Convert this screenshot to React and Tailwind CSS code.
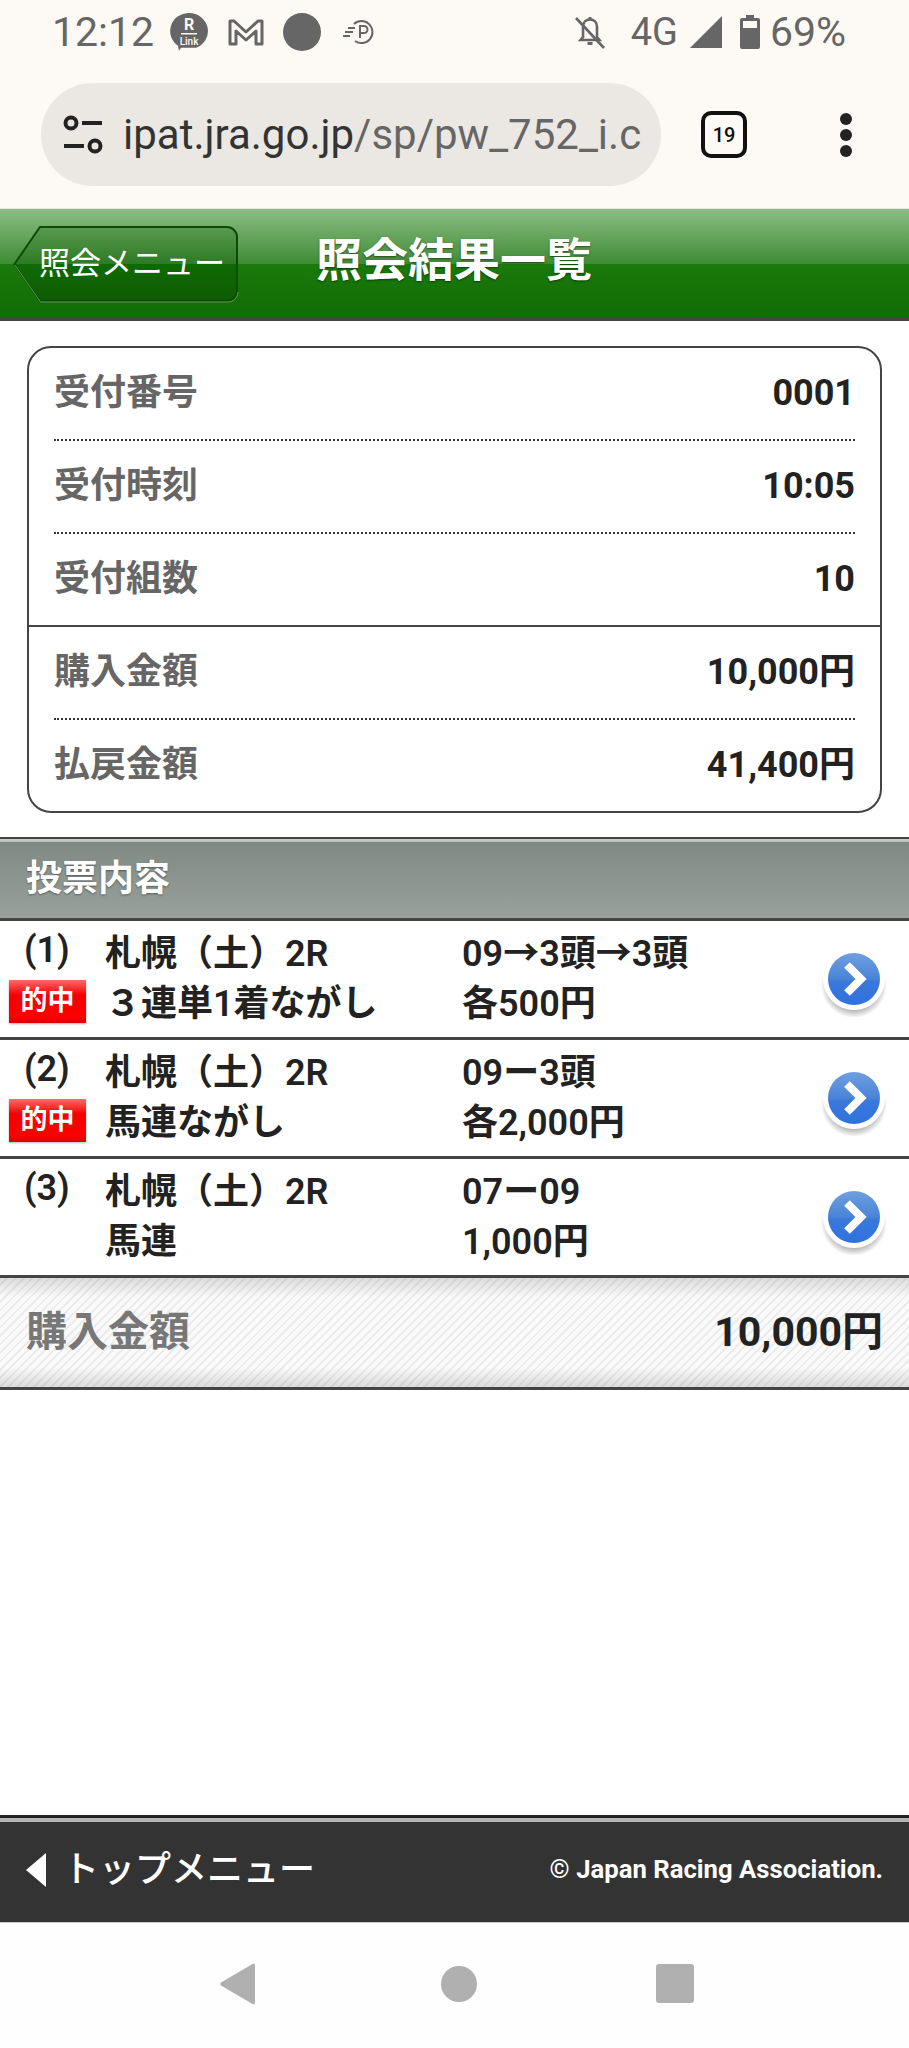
import React from 'react';

const infoTop = [
  { label: '受付番号', value: '0001' },
  { label: '受付時刻', value: '10:05' },
  { label: '受付組数', value: '10' },
];

const infoBottom = [
  { label: '購入金額', value: '10,000円' },
  { label: '払戻金額', value: '41,400円' },
];

const bets = [
  { no: '(1)', hit: true, race: '札幌（土）2R', type: '３連単1着ながし', horses: '09→3頭→3頭', amount: '各500円' },
  { no: '(2)', hit: true, race: '札幌（土）2R', type: '馬連ながし', horses: '09ー3頭', amount: '各2,000円' },
  { no: '(3)', hit: false, race: '札幌（土）2R', type: '馬連', horses: '07ー09', amount: '1,000円' },
];

const RLinkIcon = () => (
  <svg width="38" height="38" viewBox="0 0 38 38">
    <path d="M19 0a19 18 0 0 1 7 34.700H11l-2 3-1-5A18.500 18 0 0 1 19 0z" fill="#666" />
    <text x="19" y="17" textAnchor="middle" fontSize="16" fontWeight="700" fontFamily="Roboto" fill="#fdf9f5">R</text>
    <rect x="11" y="20" width="16" height="1.500" fill="#fdf9f5" />
    <text x="19" y="32" textAnchor="middle" fontSize="10" fontWeight="500" fontFamily="Roboto" fill="#fdf9f5">Link</text>
  </svg>
);

const MailIcon = () => (
  <svg width="36" height="28" viewBox="0 0 36 28" fill="none" stroke="#666" strokeWidth="3" strokeLinejoin="round">
    <path d="M2 26V3h4l12 11L30 3h4v23h-6V13l-10 9-10-9v13z" />
  </svg>
);

const PointIcon = () => (
  <svg width="32" height="26" viewBox="0 0 32 26" fill="none" stroke="#666" strokeWidth="2">
    <path d="M11 5a11 11 0 1 1 1 17" />
    <path d="M5 9h7M2 13h8M0 17h7" />
    <path d="M17 19V7h4a3.500 3.500 0 0 1 0 7h-4" />
  </svg>
);

const MutedBell = () => (
  <svg width="32" height="33" viewBox="0 0 32 33" fill="none" stroke="#666" strokeWidth="2.600">
    <path d="M9 11c0-5 3-7.500 7-7.500s7 2.500 7 7.500v10l2.500 3H6.500L9 21z" />
    <path d="M13.500 27.500h5" strokeWidth="3" />
    <path d="M16 1v2" strokeWidth="3" />
    <path d="M2 2l28 30" />
  </svg>
);

const TuneIcon = () => (
  <svg width="40" height="44" viewBox="0 0 40 44" fill="none" stroke="#222" strokeWidth="4">
    <circle cx="8" cy="10" r="5.500" />
    <path d="M19 10h20M1 33h20" />
    <circle cx="32" cy="33" r="5.500" />
  </svg>
);

const ChevronButton = () => (
  <svg width="72" height="72" viewBox="0 0 72 72">
    <defs>
      <linearGradient id="chevBlue" x1="0" y1="0" x2="0" y2="1">
        <stop offset="0" stopColor="#6f9fe0" />
        <stop offset="0.5" stopColor="#4a84d8" />
        <stop offset="0.55" stopColor="#3a78da" />
        <stop offset="1" stopColor="#2f72e0" />
      </linearGradient>
      <radialGradient id="chevShadow">
        <stop offset="0.7" stopColor="#000" stopOpacity="0.35" />
        <stop offset="1" stopColor="#000" stopOpacity="0" />
      </radialGradient>
    </defs>
    <circle cx="36" cy="40" r="33" fill="url(#chevShadow)" />
    <circle cx="36" cy="34" r="31" fill="#fff" />
    <circle cx="36" cy="34" r="26" fill="url(#chevBlue)" />
    <path d="M29 20l14 14-14 14" fill="none" stroke="#fff" strokeWidth="8" strokeLinejoin="miter" />
  </svg>
);

const InfoRow = ({ label, value }) => (
  <div className="ml-[25px] mr-[25px] flex h-[91px] items-center justify-between pb-[2px]">
    <span className="text-[36px] font-bold text-[#666]">{label}</span>
    <span className="text-[36px] font-bold text-[#222]">{value}</span>
  </div>
);

const Dots = () => <div className="ml-[25px] mr-[25px] border-t-2 border-dotted border-[#333]" />;

const App = () => {
  return (
    <div className="flex h-[2048px] w-[909px] flex-col overflow-hidden bg-white font-['Roboto','Noto_Sans_CJK_JP',sans-serif]">
      {/* status bar + browser chrome */}
      <div className="h-[208px] shrink-0 bg-[#fdf9f5]">
        <div className="flex h-[64px] items-center pl-[52px] pr-[63px] text-[#666]">
          <span className="w-[118px] text-[41px] leading-none">12:12</span>
          <RLinkIcon />
          <span className="ml-[20px] flex"><MailIcon /></span>
          <span className="ml-[19px] h-[38px] w-[38px] rounded-full bg-[#666]" />
          <span className="ml-[22px] flex"><PointIcon /></span>
          <span className="ml-auto flex"><MutedBell /></span>
          <span className="ml-[25px] text-[38px] leading-none">4G</span>
          <svg className="ml-[12px]" width="32" height="32" viewBox="0 0 32 32"><path d="M32 0v32H0z" fill="#666" /></svg>
          <svg className="ml-[18px]" width="20" height="34" viewBox="0 0 20 34">
            <path d="M6 0h8v3h4a2 2 0 0 1 2 2v27a2 2 0 0 1-2 2H2a2 2 0 0 1-2-2V5a2 2 0 0 1 2-2h4z" fill="#666" />
            <rect x="3" y="6" width="14" height="7" fill="#fdf9f5" />
          </svg>
          <span className="ml-[10px] text-[41px] leading-none">69%</span>
        </div>
        <div className="mt-[19px] flex items-center">
          <div className="ml-[41px] flex h-[103px] w-[620px] items-center overflow-hidden rounded-full bg-[#ebe8e4] pl-[22px]">
            <TuneIcon />
            <span className="ml-[20px] whitespace-nowrap text-[42px] leading-none text-[#333]">
              ipat.jra.go.jp<span className="text-[#666]">/sp/pw_752_i.c</span>
            </span>
          </div>
          <div className="ml-[40px] flex h-[47px] w-[46px] items-center justify-center rounded-[10px] border-[4px] border-[#111] text-[20px] font-medium text-[#111]">19</div>
          <div className="ml-[93px] flex flex-col gap-[4px]">
            <span className="h-[12px] w-[12px] rounded-full bg-[#222]" />
            <span className="h-[12px] w-[12px] rounded-full bg-[#222]" />
            <span className="h-[12px] w-[12px] rounded-full bg-[#222]" />
          </div>
        </div>
      </div>

      {/* green title bar */}
      <div className="flex h-[113px] shrink-0 items-center border-t border-b-[3px] border-t-[#e6e2dc] border-b-[#444] bg-[linear-gradient(#8dbd85_0%,#3f8c35_50%,#1a7a0a_50%,#126b06_100%)] pl-[13px]">
        <div className="relative flex h-[78px] w-[226px] items-center justify-end pr-[14px]">
          <svg className="absolute inset-0" width="226" height="78" viewBox="0 0 226 78">
            <defs>
              <linearGradient id="backBtn" x1="0" y1="0" x2="0" y2="1">
                <stop offset="0" stopColor="#5a9a50" />
                <stop offset="0.5" stopColor="#2e7a25" />
                <stop offset="0.5" stopColor="#0f6a03" />
                <stop offset="1" stopColor="#0e5c02" />
              </linearGradient>
            </defs>
            <path d="M1.500 39L27 2h187a10 10 0 0 1 10 10v54a10 10 0 0 1-10 10H27z" fill="url(#backBtn)" stroke="#0c4c05" strokeWidth="2" />
            <path d="M2 40L27.500 77H214a10 10 0 0 0 11-10" fill="none" stroke="#5c9c52" strokeWidth="1" />
          </svg>
          <span className="relative text-[31px] leading-none text-white">照会メニュー</span>
        </div>
        <h1 className="mb-[7px] ml-[77px] text-[46px] font-bold leading-none text-white [text-shadow:0_1px_2px_rgba(0,0,0,0.5)]">照会結果一覧</h1>
      </div>

      {/* summary card */}
      <div className="mx-[27px] mt-[25px] h-[467px] shrink-0 rounded-[24px] border-2 border-[#444]">
        {infoTop.map((row, i) => (
          <div key={row.label}>
            <InfoRow label={row.label} value={row.value} />
            {i < infoTop.length - 1 && <Dots />}
          </div>
        ))}
        <div className="border-t-2 border-[#444]" />
        {infoBottom.map((row, i) => (
          <div key={row.label}>
            <InfoRow label={row.label} value={row.value} />
            {i < infoBottom.length - 1 && <Dots />}
          </div>
        ))}
      </div>

      {/* bet list */}
      <div className="mt-[24px] shrink-0">
        <div className="flex h-[84px] items-center border-t-[2px] border-b-[3px] border-t-[#444] border-b-[#444] bg-[linear-gradient(#c4cac6_0%,#c4cac6_3%,#808a85_4%,#98a19b_100%)] pl-[26px]">
          <span className="text-[36px] font-bold leading-none text-white [text-shadow:0_1px_2px_rgba(0,0,0,0.4)]">投票内容</span>
        </div>
        {bets.map((bet) => (
          <div key={bet.no} className="flex h-[119px] border-b-[3px] border-[#444] pt-[8px] text-[36px] font-semibold leading-[50px] text-[#222]">
            <div className="w-[105px] shrink-0">
              <div className="-mt-[4px] h-[55px] pl-[24px]">{bet.no}</div>
              {bet.hit && (
                <div className="ml-[9px] flex h-[43px] w-[77px] items-center justify-center bg-[linear-gradient(#ff6a6a_0%,#f40000_35%,#ff0000_85%,#d80000_100%)] text-[27px] font-bold leading-none text-white shadow-[0_1px_2px_rgba(0,0,0,0.3)]">的中</div>
              )}
            </div>
            <div className="w-[357px] shrink-0">
              <div>{bet.race}</div>
              <div>{bet.type}</div>
            </div>
            <div className="flex-1">
              <div>{bet.horses}</div>
              <div>{bet.amount}</div>
            </div>
            <div className="mr-[19px] mt-[16px] shrink-0"><ChevronButton /></div>
          </div>
        ))}
        <div className="flex h-[112px] items-center justify-between border-b-[3px] border-[#444] bg-[linear-gradient(rgba(0,0,0,0.12)_0%,rgba(0,0,0,0)_18%,rgba(0,0,0,0)_82%,rgba(0,0,0,0.12)_100%),repeating-linear-gradient(135deg,#fafafa_0px,#fafafa_4px,#ececec_4px,#ececec_6px)] pl-[26px] pr-[26px]">
          <span className="text-[41px] font-bold leading-none text-[#777]">購入金額</span>
          <span className="text-[41px] font-bold leading-none text-[#222]">10,000円</span>
        </div>
      </div>

      <div className="flex-1" />

      {/* page footer */}
      <div className="flex h-[107px] shrink-0 items-center justify-between border-t-[3px] border-t-[#222] bg-[linear-gradient(#b4b4b4_0px,#b4b4b4_4px,#333_4px,#333_100%)] pl-[26px] pr-[26px]">
        <div className="flex items-center">
          <svg width="20" height="34" viewBox="0 0 20 34"><path d="M20 0v34L0 17z" fill="#fff" /></svg>
          <span className="ml-[17px] text-[36px] font-medium leading-none text-white">トップメニュー</span>
        </div>
        <span className="text-[25.7px] font-bold leading-none text-white">© Japan Racing Association.</span>
      </div>

      {/* android nav */}
      <div className="flex h-[126px] shrink-0 items-center border-t border-[#ccc] bg-[#fefefe] pb-[4px] pl-[220px]">
        <svg width="36" height="42" viewBox="0 0 36 42"><path d="M35 2v38a1.500 1.500 0 0 1-2.500 1L1 22.500a2 2 0 0 1 0-3L32.500 1A1.500 1.500 0 0 1 35 2z" fill="#b0b0b0" /></svg>
        <span className="ml-[185px] h-[36px] w-[36px] rounded-full bg-[#b0b0b0]" />
        <span className="ml-[179px] h-[39px] w-[38px] rounded-[3px] bg-[#b0b0b0]" />
      </div>
    </div>
  );
};

export default App;
